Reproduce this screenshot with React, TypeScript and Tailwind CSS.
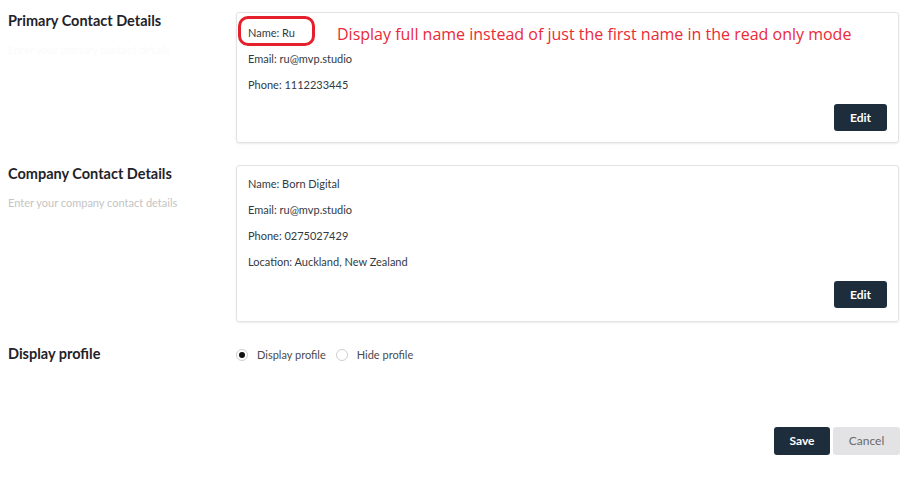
import React from 'react';

const lato = { fontFamily: 'Lato, "Open Sans", sans-serif' };

function Row({ children }: { children: React.ReactNode }) {
  return <div className="text-[11px] leading-[16px] text-[#333a42]">{children}</div>;
}

function EditButton() {
  return (
    <div className="flex justify-end mt-[11px]">
      <button className="w-[53px] h-[27px] rounded-[3px] bg-[#1e2d3c] text-white text-[12px] font-bold">
        Edit
      </button>
    </div>
  );
}

function Radio({ checked, label }: { checked?: boolean; label: string }) {
  return (
    <label className="flex items-center gap-[9px]">
      <span className="w-[12px] h-[12px] rounded-full border border-[#cfcfcf] flex items-center justify-center bg-white">
        {checked && <span className="w-[6px] h-[6px] rounded-full bg-[#111]" />}
      </span>
      <span className="text-[11px] text-[#4a4a4a]">{label}</span>
    </label>
  );
}

export default function App() {
  return (
    <div className="w-[915px] h-[486px] bg-white pl-2 pr-[16px] pt-[12px]" style={lato}>
      {/* Primary Contact */}
      <div className="flex">
        <div className="w-[228px]">
          <h3 className="text-[14.5px] leading-[18px] font-bold text-[#1f2328]">Primary Contact Details</h3>
          <p className="mt-[12px] text-[11px] text-[#fbfbfb]">Enter your primary contact details</p>
        </div>
        <div className="relative flex-1 border border-[#e3e3e3] rounded-[3px] shadow-[0_1px_2px_rgba(0,0,0,0.08)] p-[11px] pt-[12px]">
          <div className="flex flex-col gap-[10px]">
            <Row>Name: Ru</Row>
            <Row>Email: ru@mvp.studio</Row>
            <Row>Phone: 1112233445</Row>
          </div>
          <EditButton />
          {/* annotation */}
          <div className="absolute left-[1px] top-[3px] w-[77px] h-[30px] border-[3px] border-[#e4202d] rounded-[10px]" />
          <div
            className="absolute left-[100px] top-[10px] text-[16px] leading-[22px] text-[#ea2a37] whitespace-nowrap"
            style={{ fontFamily: '"Open Sans", sans-serif' }}
          >
            Display full name instead of just the first name in the read only mode
          </div>
        </div>
      </div>

      {/* Company Contact */}
      <div className="flex mt-[22px]">
        <div className="w-[228px]">
          <h3 className="text-[14.5px] leading-[18px] font-bold text-[#1f2328]">Company Contact Details</h3>
          <p className="mt-[12px] text-[11px] text-[#c4c4c4]">Enter your company contact details</p>
        </div>
        <div className="flex-1 border border-[#e3e3e3] rounded-[3px] shadow-[0_1px_2px_rgba(0,0,0,0.08)] p-[11px] pt-[10px] pb-[13px]">
          <div className="flex flex-col gap-[10px]">
            <Row>Name: Born Digital</Row>
            <Row>Email: ru@mvp.studio</Row>
            <Row>Phone: 0275027429</Row>
            <Row>Location: Auckland, New Zealand</Row>
          </div>
          <EditButton />
        </div>
      </div>

      {/* Display profile */}
      <div className="flex mt-[22px] items-center">
        <div className="w-[228px]">
          <h3 className="text-[14.5px] leading-[18px] font-bold text-[#1f2328]">Display profile</h3>
        </div>
        <div className="flex items-center gap-[10px] mt-[3px]">
          <Radio checked label="Display profile" />
          <Radio label="Hide profile" />
        </div>
      </div>

      {/* Actions */}
      <div className="flex justify-end gap-[3px] mt-[63px] -mr-[1px]">
        <button className="w-[56px] h-[28px] rounded-[3px] bg-[#1e2d3c] text-white text-[12px] font-bold">
          Save
        </button>
        <button className="w-[67px] h-[28px] rounded-[3px] bg-[#e3e3e5] text-[#6a6a6a] text-[12px]">
          Cancel
        </button>
      </div>
    </div>
  );
}
